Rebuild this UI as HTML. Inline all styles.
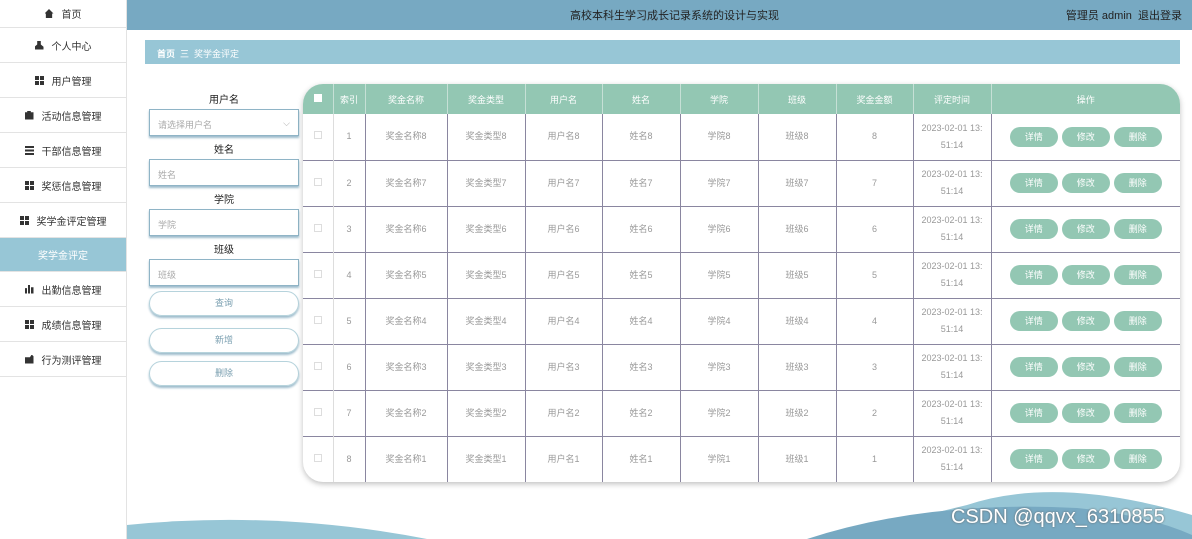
<!DOCTYPE html>
<html><head><meta charset="utf-8"><style>
*{box-sizing:border-box;margin:0;padding:0}
body{width:1192px;height:539px;overflow:hidden;background:#fff;font-family:"Liberation Sans","Noto Sans CJK SC",sans-serif;position:relative;font-size:11px;color:#333}
.side{position:absolute;left:0;top:0;width:127px;height:539px;background:#fff;border-right:1px solid #e3e3e3}
.side div{height:35px;border-bottom:1px solid #e3e3e3;display:flex;align-items:center;justify-content:center;font-size:10px;color:#333}
.side div.act{background:#97c6d6;color:#fff}
.side i{display:inline-block;width:9px;height:9px;margin-right:8px;background:#333}
.side i.g{background:linear-gradient(90deg,transparent 4px,#fff 4px,#fff 5px,transparent 5px),linear-gradient(transparent 4px,#fff 4px,#fff 5px,transparent 5px),#333}
.top{position:absolute;left:127px;top:0;right:0;height:30px;background:#77a9c2;color:#222;font-size:11px}
.bc{position:absolute;left:145px;top:40px;width:1035px;height:24px;background:#97c6d6;color:#fff;font-size:9px;padding:7px 12px}
.lbl{position:absolute;left:149px;width:150px;text-align:center;font-size:10px;color:#222}
.inp{position:absolute;left:149px;width:150px;height:27px;border:1px solid #8fb4c6;box-shadow:0 2px 2px #9dbccc;font-size:9px;color:#aaa;padding:8px 8px}
.btn{position:absolute;left:149px;width:150px;height:25px;border:1px solid #b6d3dc;border-radius:13px;box-shadow:0 2px 2px #9dbccc;text-align:center;font-size:9px;color:#7a9fb0;line-height:23px}
.tbl{position:absolute;left:303px;top:84px;width:877px;height:398px;border-radius:20px;overflow:hidden;box-shadow:0 2px 6px rgba(0,0,0,.25);background:#fff}
table{border-collapse:collapse;width:100%;font-size:9px;color:#999}
th{background:#93c7b3;color:#fff;height:30px;font-weight:normal;border-left:1px solid #c6e0d6}
td{height:46px;text-align:center;border-top:1px solid #8a86a0;border-left:1px solid #8a86a0;line-height:17px}
td:first-child,th:first-child{border-left:none}
td:nth-child(2){border-left:1px solid #ddd}
.cb{display:inline-block;width:8px;height:8px;border:1px solid #ddd}
.b{display:inline-block;width:48px;height:20px;line-height:20px;border-radius:10px;background:#93c7b3;color:#fff;margin:0 2px}
</style></head><body>
<div class="side">
<div style="height:28px"><i style="clip-path:polygon(50% 0,100% 50%,85% 50%,85% 100%,15% 100%,15% 50%,0 50%)"></i>首页</div>
<div><i style="clip-path:polygon(30% 0,70% 0,70% 45%,100% 70%,100% 100%,0 100%,0 70%,30% 45%)"></i>个人中心</div>
<div><i class="g"></i>用户管理</div>
<div><i style="clip-path:polygon(30% 0,70% 0,70% 20%,100% 20%,100% 100%,0 100%,0 20%,30% 20%)"></i>活动信息管理</div>
<div><i style="background:repeating-linear-gradient(#333 0 2px,#fff 2px 3.5px)"></i>干部信息管理</div>
<div><i class="g"></i>奖惩信息管理</div>
<div><i class="g"></i>奖学金评定管理</div>
<div class="act" style="height:34px">奖学金评定</div>
<div><i style="background:linear-gradient(90deg,#333 2px,#fff 2px 3px,#333 3px 5px,#fff 5px 6px,#333 6px);clip-path:polygon(0 40%,30% 40%,30% 0,65% 0,65% 30%,100% 30%,100% 100%,0 100%)"></i>出勤信息管理</div>
<div><i class="g"></i>成绩信息管理</div>
<div><i style="clip-path:polygon(0 30%,60% 30%,80% 0,100% 20%,100% 100%,0 100%)"></i>行为测评管理</div>
</div>
<div class="top"><span style="position:absolute;left:443px;top:7px">高校本科生学习成长记录系统的设计与实现</span><span style="position:absolute;right:10px;top:7px">管理员 admin &nbsp;退出登录</span></div>
<div class="bc"><b>首页</b> &nbsp;三&nbsp; 奖学金评定</div>
<div class="lbl" style="top:91px">用户名</div>
<div class="inp" style="top:109px">请选择用户名<span style="float:right">⌵</span></div>
<div class="lbl" style="top:141px">姓名</div>
<div class="inp" style="top:159px">姓名</div>
<div class="lbl" style="top:191px">学院</div>
<div class="inp" style="top:209px">学院</div>
<div class="lbl" style="top:241px">班级</div>
<div class="inp" style="top:259px">班级</div>
<div class="btn" style="top:291px">查询</div>
<div class="btn" style="top:328px">新增</div>
<div class="btn" style="top:361px">删除</div>
<div class="tbl"><table>
<tr><th style="width:30px"><span class="cb" style="background:#fff;border-color:#fff"></span></th><th style="width:32px">索引</th><th style="width:82px">奖金名称</th><th style="width:78px">奖金类型</th><th style="width:77px">用户名</th><th style="width:78px">姓名</th><th style="width:78px">学院</th><th style="width:78px">班级</th><th style="width:77px">奖金金额</th><th style="width:78px">评定时间</th><th>操作</th></tr>
<tr><td style="border-top:none"><span class="cb"></span></td><td style="border-top:none">1</td><td style="border-top:none">奖金名称8</td><td style="border-top:none">奖金类型8</td><td style="border-top:none">用户名8</td><td style="border-top:none">姓名8</td><td style="border-top:none">学院8</td><td style="border-top:none">班级8</td><td style="border-top:none">8</td><td style="border-top:none">2023-02-01 13:<br>51:14</td><td style="border-top:none"><span class="b">详情</span><span class="b">修改</span><span class="b">删除</span></td></tr>
<tr><td><span class="cb"></span></td><td>2</td><td>奖金名称7</td><td>奖金类型7</td><td>用户名7</td><td>姓名7</td><td>学院7</td><td>班级7</td><td>7</td><td>2023-02-01 13:<br>51:14</td><td><span class="b">详情</span><span class="b">修改</span><span class="b">删除</span></td></tr>
<tr><td><span class="cb"></span></td><td>3</td><td>奖金名称6</td><td>奖金类型6</td><td>用户名6</td><td>姓名6</td><td>学院6</td><td>班级6</td><td>6</td><td>2023-02-01 13:<br>51:14</td><td><span class="b">详情</span><span class="b">修改</span><span class="b">删除</span></td></tr>
<tr><td><span class="cb"></span></td><td>4</td><td>奖金名称5</td><td>奖金类型5</td><td>用户名5</td><td>姓名5</td><td>学院5</td><td>班级5</td><td>5</td><td>2023-02-01 13:<br>51:14</td><td><span class="b">详情</span><span class="b">修改</span><span class="b">删除</span></td></tr>
<tr><td><span class="cb"></span></td><td>5</td><td>奖金名称4</td><td>奖金类型4</td><td>用户名4</td><td>姓名4</td><td>学院4</td><td>班级4</td><td>4</td><td>2023-02-01 13:<br>51:14</td><td><span class="b">详情</span><span class="b">修改</span><span class="b">删除</span></td></tr>
<tr><td><span class="cb"></span></td><td>6</td><td>奖金名称3</td><td>奖金类型3</td><td>用户名3</td><td>姓名3</td><td>学院3</td><td>班级3</td><td>3</td><td>2023-02-01 13:<br>51:14</td><td><span class="b">详情</span><span class="b">修改</span><span class="b">删除</span></td></tr>
<tr><td><span class="cb"></span></td><td>7</td><td>奖金名称2</td><td>奖金类型2</td><td>用户名2</td><td>姓名2</td><td>学院2</td><td>班级2</td><td>2</td><td>2023-02-01 13:<br>51:14</td><td><span class="b">详情</span><span class="b">修改</span><span class="b">删除</span></td></tr>
<tr><td><span class="cb"></span></td><td>8</td><td>奖金名称1</td><td>奖金类型1</td><td>用户名1</td><td>姓名1</td><td>学院1</td><td>班级1</td><td>1</td><td>2023-02-01 13:<br>51:14</td><td><span class="b">详情</span><span class="b">修改</span><span class="b">删除</span></td></tr>
</table></div>
<svg style="position:absolute;left:127px;top:480px" width="1065" height="59">
<path d="M0 45 Q150 30 300 59 L0 59Z" fill="#97c6d6"/>
<path d="M840 25 Q930 -5 1065 35 L1065 59 L700 59Z" fill="#97c6d6"/>
<path d="M680 59 Q800 20 950 28 Q1020 35 1065 55 L1065 59Z" fill="#77a9c2"/>
</svg>
<div style="position:absolute;left:951px;top:506px;font-size:20px;color:#fff;text-shadow:0 0 2px #666">CSDN @qqvx_6310855</div>
</body></html>
